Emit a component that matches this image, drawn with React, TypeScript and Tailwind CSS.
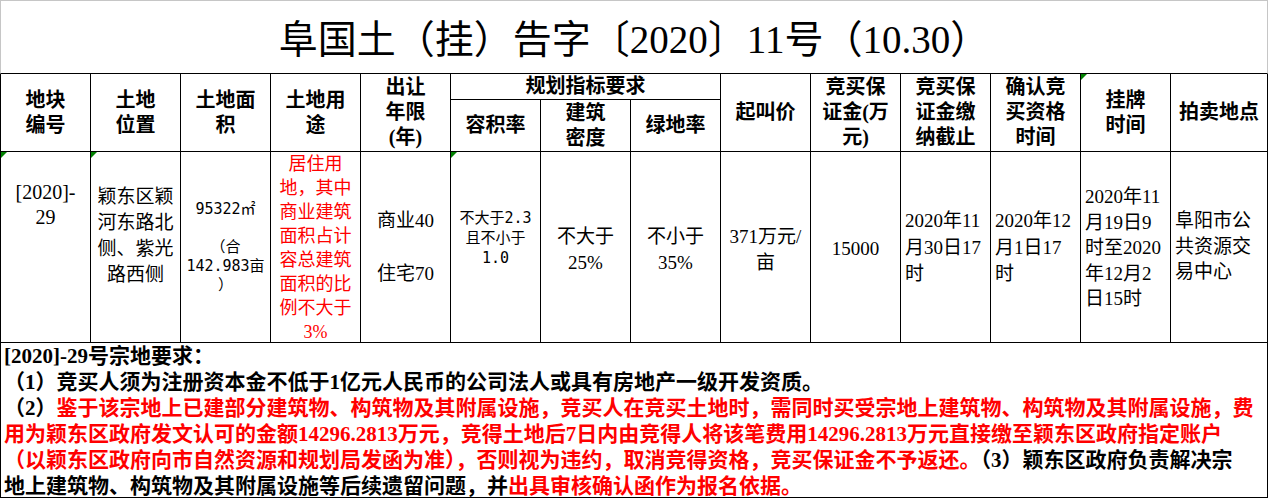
import React from 'react';

const headCell = 'flex flex-col items-center justify-center border-r border-b border-black text-center font-bold text-[20px] leading-[25px]';
const dataCell = 'relative border-r border-b border-black';

function Flag() {
  return (
    <span className="absolute left-0 top-0 h-0 w-0 border-t-[6px] border-r-[6px] border-t-[#008000] border-r-transparent" />
  );
}

function Lines({ lines }: { lines: string[] }) {
  return (
    <>
      {lines.map((l, i) => (
        <div key={i} className="whitespace-nowrap">
          {l === '' ? '\u00a0' : l}
        </div>
      ))}
    </>
  );
}

export default function App() {
  return (
    <div className="w-[1268px] h-[498px] bg-white text-black font-['Liberation_Serif','Noto_Sans_CJK_SC',serif]">
      {/* title */}
      <div className="h-[74px] border-t border-x border-t-[#c6c6c6] border-x-[#c6c6c6] border-b border-b-black flex items-center justify-center pt-[5px]">
        <span className="text-[39px] leading-none whitespace-nowrap">阜国土（挂）告字〔2020〕11号（10.30）</span>
      </div>

      <div className="grid grid-cols-[repeat(13,90px)_97px] grid-rows-[26px_52px_191px] border-l border-black">
        {/* header */}
        <div className={`${headCell} row-span-2`}><Lines lines={['地块', '编号']} /></div>
        <div className={`${headCell} row-span-2`}><Lines lines={['土地', '位置']} /></div>
        <div className={`${headCell} row-span-2`}><Lines lines={['土地面', '积']} /></div>
        <div className={`${headCell} row-span-2`}><Lines lines={['土地用', '途']} /></div>
        <div className={`${headCell} row-span-2`}><Lines lines={['出让', '年限', '(年)']} /></div>
        <div className={`${headCell} col-span-3`}>规划指标要求</div>
        <div className={`${headCell} row-span-2`}>起叫价</div>
        <div className={`${headCell} row-span-2`}><Lines lines={['竞买保', '证金(万', '元)']} /></div>
        <div className={`${headCell} row-span-2`}><Lines lines={['竞买保', '证金缴', '纳截止']} /></div>
        <div className={`${headCell} row-span-2`}><Lines lines={['确认竞', '买资格', '时间']} /></div>
        <div className={`${headCell} row-span-2 relative`}>
          <Flag />
          <Lines lines={['挂牌', '时间']} />
        </div>
        <div className={`${headCell} row-span-2`}>拍卖地点</div>
        <div className={headCell}>容积率</div>
        <div className={headCell}><Lines lines={['建筑', '密度']} /></div>
        <div className={headCell}>绿地率</div>

        {/* data row */}
        <div className={`${dataCell} text-center pt-[28px] text-[20px] leading-[25px]`}>
          <Flag />
          <Lines lines={['[2020]-', '29']} />
        </div>
        <div className={`${dataCell} text-center pt-[32px] text-[19px] leading-[26px]`}>
          <Flag />
          <Lines lines={['颖东区颖', '河东路北', '侧、紫光', '路西侧']} />
        </div>
        <div className={`${dataCell} text-center pt-[48px] text-[15px] leading-[19px] font-['DejaVu_Sans_Mono','Noto_Sans_CJK_SC',monospace]`}>
          <Lines lines={['95322㎡', '', '（合', '142.983亩', '）']} />
        </div>
        <div className={`${dataCell} text-center pt-0 text-[18px] leading-[24px] text-[#ff0000]`}>
          <Lines lines={['居住用', '地，其中', '商业建筑', '面积占计', '容总建筑', '面积的比', '例不大于', '3%']} />
        </div>
        <div className={`${dataCell} text-center pt-[56px] text-[19px] leading-[26.5px]`}>
          <Lines lines={['商业40', '', '住宅70']} />
        </div>
        <div className={`${dataCell} text-center pt-[56px] text-[15px] leading-[20px] font-['DejaVu_Sans_Mono','Noto_Sans_CJK_SC',monospace]`}>
          <Flag />
          <Lines lines={['不大于2.3', '且不小于', '1.0']} />
        </div>
        <div className={`${dataCell} text-center pt-[72px] text-[19px] leading-[26px]`}>
          <Lines lines={['不大于', '25%']} />
        </div>
        <div className={`${dataCell} text-center pt-[72px] text-[19px] leading-[26px]`}>
          <Lines lines={['不小于', '35%']} />
        </div>
        <div className={`${dataCell} text-center pt-[72px] text-[19px] leading-[26px]`}>
          <Lines lines={['371万元/', '亩']} />
        </div>
        <div className={`${dataCell} text-center pt-[84px] text-[19px] leading-[26px]`}>15000</div>
        <div className={`${dataCell} text-left pl-[4px] pt-[56px] text-[19px] leading-[26.5px]`}>
          <Lines lines={['2020年11', '月30日17', '时']} />
        </div>
        <div className={`${dataCell} text-left pl-[4px] pt-[56px] text-[19px] leading-[26.5px]`}>
          <Lines lines={['2020年12', '月1日17', '时']} />
        </div>
        <div className={`${dataCell} text-left pl-[4px] pt-[32px] text-[19px] leading-[25.5px]`}>
          <Lines lines={['2020年11', '月19日9', '时至2020', '年12月2', '日15时']} />
        </div>
        <div className={`${dataCell} text-left pl-[4px] pt-[56px] text-[19px] leading-[25.5px]`}>
          <Lines lines={['阜阳市公', '共资源交', '易中心']} />
        </div>
      </div>

      {/* notes */}
      <div className="h-[155px] border-x border-b border-black pl-[3px] text-[21px] leading-[26px] font-bold whitespace-nowrap">
        <div>[2020]-29号宗地要求：</div>
        <div>（1）竞买人须为注册资本金不低于1亿元人民币的公司法人或具有房地产一级开发资质。</div>
        <div>
          （2）<span className="text-[#ff0000]">鉴于该宗地上已建部分建筑物、构筑物及其附属设施，竞买人在竞买土地时，需同时买受宗地上建筑物、构筑物及其附属设施，费</span>
        </div>
        <div className="text-[#ff0000]">
          用为颖东区政府发文认可的金额14296.2813万元，竞得土地后7日内由竞得人将该笔费用14296.2813万元直接缴至颖东区政府指定账户
        </div>
        <div>
          <span className="text-[#ff0000]">（以颖东区政府向市自然资源和规划局发函为准），否则视为违约，取消竞得资格，竞买保证金不予返还。</span>（3）颖东区政府负责解决宗
        </div>
        <div>
          地上建筑物、构筑物及其附属设施等后续遗留问题，并<span className="text-[#ff0000]">出具审核确认函作为报名依据。</span>
        </div>
      </div>
    </div>
  );
}
